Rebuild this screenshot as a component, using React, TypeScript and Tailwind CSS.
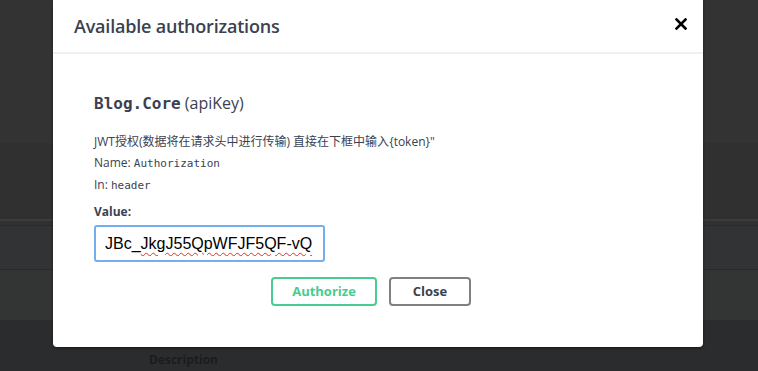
const App = () => {
  return (
    <div className="relative w-[758px] h-[371px] overflow-hidden bg-[#333333]">
      {/* dimmed page behind the dialog */}
      <div className="flex flex-col w-full">
        <div className="h-[143px] bg-[#333333]" />
        <div className="h-[76px] bg-[#303030]" />
        <div className="h-[2px] bg-[#3b3b3b]" />
        <div className="h-[4px] bg-[#313131]" />
        <div className="h-px bg-[#1f2c3d]" />
        <div className="h-[43px] bg-[#323334]" />
        <div className="h-px bg-[#1f2c3d]" />
        <div className="h-[50px] bg-[#333434]" />
        <div className="h-[51px] bg-[#2b2c2e] pl-[149px] pt-[32px]">
          <span className="block font-['Open_Sans'] text-[12px] leading-[16px] font-bold text-[#1b1c1e]">
            Description
          </span>
        </div>
      </div>

      <div className="absolute left-[53px] top-0 w-[650px] h-[347px] bg-white rounded-b-[4px] shadow-[0_1px_3px_rgba(0,0,0,0.5)]">
        <div className="h-[54px] border-b-2 border-[#f0f0f0] flex items-center justify-between pl-[21px] pr-[16px]">
          <h3 className="font-['Open_Sans'] text-[18px] font-semibold text-[#3b4151] tracking-[-0.2px]">
            Available authorizations
          </h3>
          <svg width="12" height="12" viewBox="0 0 12 12" className="mb-[4px]">
            <path d="M1.5 1.5L10.5 10.5M10.5 1.5L1.5 10.5" stroke="#000" strokeWidth="2.6" strokeLinecap="square" />
          </svg>
        </div>

        <div className="pl-[41px] pt-[38px]">
          <h4 className="text-[16px] leading-[22px] text-[#3b4151]">
            <code className="font-['DejaVu_Sans_Mono'] font-bold">Blog.Core</code>
            <span className="font-['Open_Sans']"> (apiKey)</span>
          </h4>

          <div className="mt-[18px] font-['Open_Sans','Noto_Sans_CJK_SC',sans-serif] text-[12px] text-[#3b4151] flex flex-col gap-[4px]">
            <p className="leading-[17px]">JWT授权(数据将在请求头中进行传输) 直接在下框中输入{'{token}'}"</p>
            <p className="leading-[17px]">
              Name: <code className="font-['DejaVu_Sans_Mono'] text-[11px]">Authorization</code>
            </p>
            <p className="leading-[17px]">
              In: <code className="font-['DejaVu_Sans_Mono'] text-[11px]">header</code>
            </p>
          </div>

          <label className="block mt-[9px] font-['Open_Sans'] text-[12px] font-bold text-[#3b4151] leading-[17px]">
            Value:
          </label>
          <div className="mt-[5px] w-[231px] h-[37px] border-2 border-[#74aef0] rounded-[3px] flex items-center pl-[9px] whitespace-nowrap overflow-hidden font-['Liberation_Sans'] text-[16px] text-black">
            <span>JBc_</span>
            <span className="underline decoration-wavy decoration-[#e0302a] decoration-1 underline-offset-[3px]">JkgJ55QpWFJF5QF-vQ</span>
          </div>

          <div className="flex gap-[12px] mt-[15px] pl-[177px]">
            <button className="w-[106px] h-[29px] border-2 border-[#49cc90] rounded-[4px] font-['Open_Sans'] text-[13px] font-bold text-[#49cc90]">
              Authorize
            </button>
            <button className="w-[82px] h-[29px] border-2 border-[#808080] rounded-[4px] font-['Open_Sans'] text-[13px] font-bold text-[#3b4151]">
              Close
            </button>
          </div>
        </div>
      </div>
    </div>
  )
}

export default App
